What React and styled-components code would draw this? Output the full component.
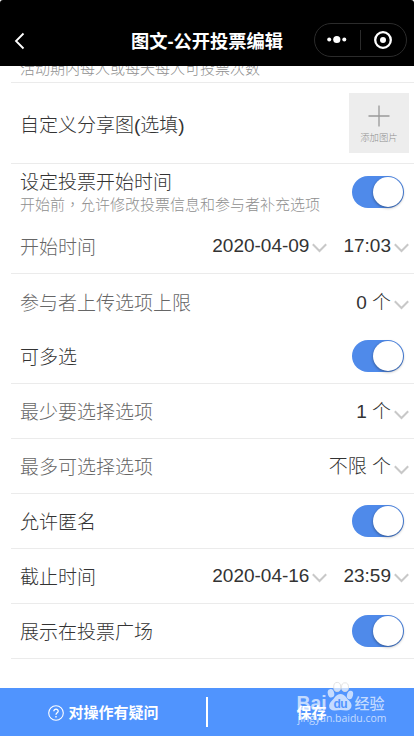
import React, { useState } from "react";
import styled, { createGlobalStyle } from "styled-components";

const GlobalStyle = createGlobalStyle`
  * {
    box-sizing: border-box;
  }

  body {
    margin: 0;
    background: #fff;
    font-family: "Liberation Sans", "Noto Sans CJK SC", sans-serif;
  }
`;

const Page = styled.div`
  display: flex;
  flex-direction: column;
  width: 414px;
  height: 736px;
  overflow: hidden;
  background: #fff;
`;

const Header = styled.header`
  display: grid;
  grid-template-columns: 100px 1fr 100px;
  align-items: center;
  flex: none;
  height: 66px;
  padding-top: 14px;
  background: #000;
  border-radius: 3px 3px 0 0;
`;

const BackIcon = styled.svg`
  display: block;
  margin: 2px 0 0 14px;
`;

const Title = styled.h1`
  margin: 0;
  padding-top: 3px;
  color: #fff;
  font-size: 18.25px;
  font-weight: bold;
  line-height: 26px;
  text-align: center;
  white-space: nowrap;
`;

const Capsule = styled.div`
  display: flex;
  align-items: center;
  width: 93px;
  height: 34px;
  border: 1px solid #2b2b2b;
  border-radius: 17px;
`;

const Form = styled.main`
  flex: 1;
  min-height: 0;
  padding-left: 11px;
`;

const ScrolledRow = styled.div`
  display: flex;
  align-items: flex-end;
  height: 17px;
  padding: 0 0 3px 9px;
  overflow: hidden;
  border-bottom: 1px solid #ebebeb;
`;

const Row = styled.div`
  display: flex;
  align-items: center;
  justify-content: space-between;
  height: ${(props) => props.$height || 55}px;
  padding: 0 5px 0 9px;
  border-bottom: ${(props) => (props.$open ? "none" : "1px solid #ebebeb")};
`;

const Label = styled.div`
  padding-top: ${(props) => (props.$tall ? 6 : 4)}px;
  color: ${(props) => (props.$sub ? "#666" : "#333")};
  font-size: 19px;
  font-weight: 300;
  line-height: 22px;
  white-space: nowrap;
`;

const Hint = styled.div`
  color: #8f8f8f;
  font-size: 15px;
  font-weight: 300;
  line-height: 20px;
  white-space: nowrap;
`;

const Comma = styled.span`
  font-family: "Noto Sans CJK TC", sans-serif;
`;

const Values = styled.div`
  display: flex;
  gap: 16px;
`;

const Value = styled.div`
  display: flex;
  align-items: center;
  gap: 3px;
  padding-top: ${(props) => (props.$unit ? 7 : 4)}px;
  color: #333;
  font-size: 19px;
  font-weight: 300;
  line-height: 22px;
  white-space: nowrap;

  span {
    margin-top: -5px;
  }
`;

const Upload = styled.button`
  display: flex;
  flex-direction: column;
  align-items: center;
  width: 60px;
  height: 60px;
  padding: 12px 0 0;
  border: 0;
  background: #ededed;
  color: #8f8f8f;
  font-family: inherit;
  font-size: 9.4px;
  font-weight: 300;
  line-height: 12px;

  svg {
    margin-bottom: 5px;
  }
`;

const Switch = styled.button`
  display: flex;
  justify-content: ${(props) => (props.$on ? "flex-end" : "flex-start")};
  width: 52px;
  height: 32px;
  margin: 0 5px 0 0;
  padding: 1px;
  border: 0;
  border-radius: 16px;
  background: ${(props) => (props.$on ? "#4f8aea" : "#dfdfdf")};
`;

const Knob = styled.span`
  width: 30px;
  height: 30px;
  border-radius: 50%;
  background: #fff;
  box-shadow: 0 1px 3px rgba(0, 0, 0, 0.4);
`;

const Footer = styled.footer`
  position: relative;
  display: flex;
  align-items: center;
  flex: none;
  height: 48px;
  background: #5094fe;
`;

const FooterButton = styled.button`
  display: flex;
  flex: 1;
  align-items: center;
  justify-content: center;
  gap: 4px;
  padding: 1px 0 0 1px;
  border: 0;
  background: none;
  color: #fff;
  font-family: inherit;
  font-size: 15px;
  font-weight: bold;
  line-height: 20px;

  span {
    padding-top: 1px;
  }
`;

const Divider = styled.div`
  width: 2px;
  height: 30px;
  background: #fff;
`;

const Watermark = styled.svg`
  position: absolute;
  left: 290px;
  top: -10px;
  pointer-events: none;
`;

const Chevron = () => (
  <svg width="15" height="10" viewBox="0 0 15 10" fill="none">
    <path d="M0.8 1.2 L7.5 8 L14.2 1.2" stroke="#c8c8c8" strokeWidth="2" />
  </svg>
);

const Picker = ({ unit, children }) => (
  <Value $unit={unit}>
    <span>{children}</span>
    <Chevron />
  </Value>
);

const Toggle = () => {
  const [on, setOn] = useState(true);

  return (
    <Switch $on={on} role="switch" aria-checked={on} onClick={() => setOn(!on)}>
      <Knob />
    </Switch>
  );
};

const App = () => {
  return (
    <Page>
      <GlobalStyle />
      <Header>
        <BackIcon width="12" height="18" viewBox="0 0 12 18" fill="none">
          <path d="M9.5 1.5 L2 9 L9.5 16.5" stroke="#fff" strokeWidth="1.8" />
        </BackIcon>
        <Title>图文-公开投票编辑</Title>
        <Capsule>
          <svg width="91" height="32" viewBox="0 0 91 32" fill="#fff">
            <circle cx="14.2" cy="15.5" r="2" />
            <circle cx="21.8" cy="15.5" r="3.6" />
            <circle cx="29.3" cy="15.5" r="2" />
            <path d="M45.5 6 V26" stroke="#2b2b2b" />
            <circle cx="68" cy="16" r="7.8" fill="none" stroke="#fff" strokeWidth="2.3" />
            <circle cx="68" cy="16" r="3" />
          </svg>
        </Capsule>
      </Header>

      <Form>
        <ScrolledRow>
          <Hint>活动期内每人或每天每人可投票次数</Hint>
        </ScrolledRow>
        <Row $height={81}>
          <Label $tall>自定义分享图(选填)</Label>
          <Upload>
            <svg width="22" height="22" viewBox="0 0 22 22">
              <path d="M11 0.5 V21.5 M0.5 11 H21.5" stroke="#999" strokeWidth="1.3" />
            </svg>
            添加图片
          </Upload>
        </Row>
        <Row $open>
          <div>
            <Label>设定投票开始时间</Label>
            <Hint>
              开始前<Comma>，</Comma>允许修改投票信息和参与者补充选项
            </Hint>
          </div>
          <Toggle />
        </Row>
        <Row>
          <Label $sub>开始时间</Label>
          <Values>
            <Picker>2020-04-09</Picker>
            <Picker>17:03</Picker>
          </Values>
        </Row>
        <Row $open>
          <Label $sub>参与者上传选项上限</Label>
          <Picker unit>0 个</Picker>
        </Row>
        <Row>
          <Label>可多选</Label>
          <Toggle />
        </Row>
        <Row>
          <Label $sub>最少要选择选项</Label>
          <Picker unit>1 个</Picker>
        </Row>
        <Row>
          <Label $sub>最多可选择选项</Label>
          <Picker unit>不限 个</Picker>
        </Row>
        <Row>
          <Label>允许匿名</Label>
          <Toggle />
        </Row>
        <Row>
          <Label>截止时间</Label>
          <Values>
            <Picker>2020-04-16</Picker>
            <Picker>23:59</Picker>
          </Values>
        </Row>
        <Row>
          <Label>展示在投票广场</Label>
          <Toggle />
        </Row>
      </Form>

      <Footer>
        <FooterButton>
          <svg width="16" height="16" viewBox="0 0 16 16" fill="none" stroke="#fff">
            <circle cx="8" cy="8" r="7.3" strokeWidth="1.1" />
            <path d="M5.8 6.3 C5.8 3.3 10.3 3.5 10.2 6.2 C10.1 7.8 8 7.9 8 9.8" strokeWidth="1.3" />
            <path d="M8 11 V12.5" strokeWidth="1.4" />
          </svg>
          <span>对操作有疑问</span>
        </FooterButton>
        <Divider />
        <FooterButton>
          <span>保存</span>
        </FooterButton>
        <Watermark width="100" height="58" viewBox="0 0 100 58">
          <g fill="#fff" fillOpacity="0.68" fontFamily="'Liberation Sans', 'Noto Sans CJK SC', sans-serif">
            <text x="6.5" y="31.5" fontSize="20" fontWeight="bold" textLength="30" lengthAdjust="spacingAndGlyphs">Bai</text>
            <text x="64.5" y="30.5" fontSize="15" fontWeight="500" textLength="30">经验</text>
            <text x="7.5" y="43.5" fontSize="11" fontFamily="'Open Sans', sans-serif" textLength="89" lengthAdjust="spacingAndGlyphs">jingyan.baidu.com</text>
            <ellipse cx="41" cy="15.3" rx="3.2" ry="4.2" transform="rotate(-15 41 15.3)" />
            <ellipse cx="47.2" cy="9" rx="3.5" ry="4.6" stroke="#ddd" strokeWidth="0.8" />
            <ellipse cx="55" cy="9.2" rx="3.5" ry="4.4" stroke="#ddd" strokeWidth="0.8" />
            <ellipse cx="60" cy="17" rx="3" ry="4.3" transform="rotate(15 60 17)" />
            <path d="M50.5 16 C55 16 56 20 59 22.5 C64 27 61 33 56 32.5 C52 31.8 49 31.8 45 32.5 C39 33 37 27 42 22.5 C45 20 46 16 50.5 16 Z" />
          </g>
          <text x="43.5" y="29.5" fontSize="12" fill="#5094fe" fontFamily="'Liberation Sans', sans-serif" fontWeight="bold" textLength="14">du</text>
        </Watermark>
      </Footer>
    </Page>
  );
};

export default App;
